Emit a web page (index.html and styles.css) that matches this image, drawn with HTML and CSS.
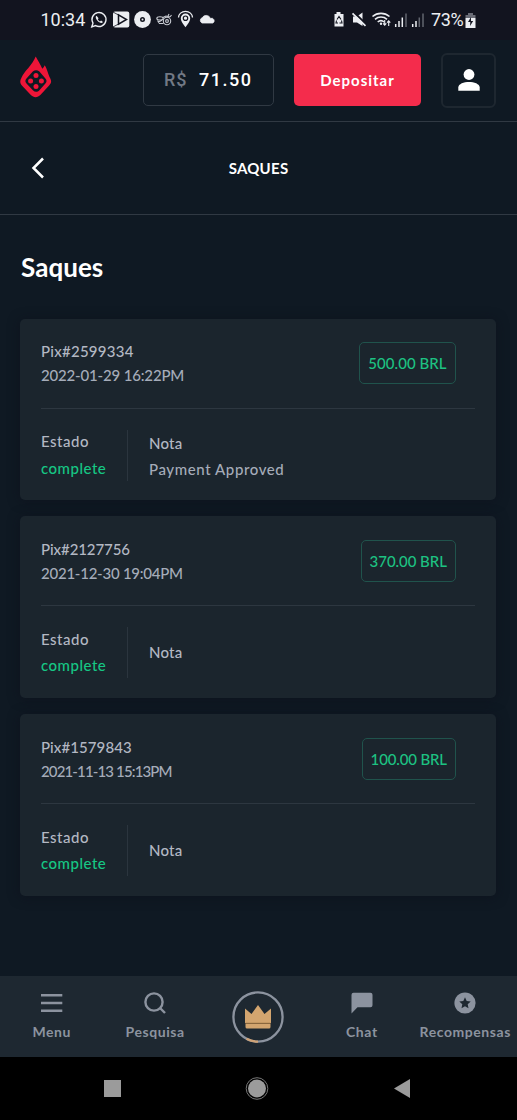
FILE: index.html
```html
<!DOCTYPE html>
<html lang="pt-BR">
<head>
<meta charset="utf-8">
<meta name="viewport" content="width=device-width, initial-scale=1">
<title>Saques</title>
<link rel="stylesheet" href="styles.css">
</head>
<body>
<div class="screen">
  <div class="status">
    <span class="clock">10:34</span>
    <svg class="status-left" width="126" height="20" viewBox="90 10 126 20" fill="none">
      <path d="M91.800 26.800l1.200-3.700a7 7 0 1 1 2.600 2.500z" stroke="#eceef2" stroke-width="1.400"/>
      <path d="M96.500 15.800c-1.400.8-.8 3 1 5s4.200 3.100 5.500 1.300l-1.900-1.500-1.200.9c-1-.5-1.700-1.300-2.100-2.300l.8-.9z" fill="#eceef2"/>
      <rect x="113" y="11.500" width="16.300" height="16" rx="2" fill="#eceef2"/>
      <path d="M118.500 14.800l8 4.700-8 4.700z" stroke="#12141f" stroke-width="1.500"/><path d="M113 12l5.500 3M113 27l5.500-3" stroke="#12141f" stroke-width=".8"/>
      <circle cx="142.500" cy="19.500" r="8.400" fill="#eceef2"/>
      <circle cx="142.500" cy="19.500" r="2.500" fill="#12141f"/><circle cx="142.500" cy="19.500" r="1" fill="#eceef2"/>
      <g stroke="#c9ccd3" stroke-width="1.100"><circle cx="167" cy="21" r="3.700"/><circle cx="167" cy="21" r="1.400"/><ellipse cx="160" cy="18.400" rx="3.200" ry="1.600"/><path d="M157.500 20.500l2 3h4M158 22.500l4-2.500M163 17.500l3-1.500 4 1M168 16l1-2M170 17l1.500-2"/></g>
      <path d="M178.500 17.500a7 6.200 0 0 1 14 0" stroke="#eceef2" stroke-width="1.300"/>
      <path d="M185.500 13.500a4.700 4.700 0 0 0-4.700 4.700c0 3.500 4.700 9 4.700 9s4.700-5.500 4.700-9a4.700 4.700 0 0 0-4.700-4.700z" fill="#eceef2"/><circle cx="185.500" cy="18.200" r="2.200" stroke="#12141f" stroke-width="1.200"/>
      <path d="M202 23a2.900 2.900 0 0 1 .2-5.300 4.600 4.600 0 0 1 8.300.8 2.500 2.500 0 0 1 2.200 4.500z" fill="#eceef2" stroke="#eceef2" stroke-width=".8"/>
    </svg>
    <svg class="status-right" width="96" height="20" viewBox="331 10 96 20" fill="none">
      <path d="M334.500 14h2v-2h4v2h3v12.500h-9z" fill="#eceef2"/>
      <path d="M337 19.500l2-3 2 3M336.500 20.500l-.5 2.500h2M341.500 20.500l.5 2.500h-2.500" stroke="#12141f" stroke-width="1.100"/>
      <path d="M353 16.500h4l5.500-4v13.500L357 22.500h-4z" fill="#eceef2"/>
      <path d="M353.500 12l13 12.500" stroke="#12141f" stroke-width="2"/><path d="M352.500 13.300l13 12.500" stroke="#eceef2" stroke-width="1.700"/>
      <path d="M372.500 16.500a13 13 0 0 1 17 0M375 19.300a9 9 0 0 1 12 0M377.700 22a5 5 0 0 1 6.500 0" stroke="#eceef2" stroke-width="1.600"/><circle cx="381" cy="23.800" r="1.200" fill="#eceef2"/>
      <path d="M384.700 20v5m-1.600-1.600l1.600 1.800 1.600-1.800M388.700 26v-5m-1.600 1.600l1.600-1.800 1.600 1.800" stroke="#eceef2" stroke-width="1.100"/>
      <g stroke-width="1.500"><path d="M395.700 27v-3M399 27v-6M402.300 27v-9.500" stroke="#eceef2"/><path d="M406 27V13.500" stroke="#62656f"/><path d="M412.700 27v-3M416 27v-6" stroke="#eceef2"/><path d="M419.300 27v-9.500M423 27V13.500" stroke="#62656f"/></g>
    </svg>
    <span class="percent">73%</span>
    <svg class="battery" width="11" height="15" viewBox="0 0 11 15"><path d="M3 0h5v2h2.500v3H.5V2H3z" fill="#696b75"/><path d="M.5 5h10v10H.5z" fill="#eceef2"/><path d="M6 4L3 9h2.300L5 13l3.200-5H6z" fill="#12141f"/></svg>
  </div>

  <header class="header">
    <svg class="logo" width="32" height="42" viewBox="0 0 32 42">
      <path d="M15.700.5C17.500 4 20.500 8.500 22.300 12.800c1-1 1.800-2 2.500-3.500 2.200 3.500 3 8 4.700 11.700 2.200 4 2.300 5.600-.6 8.700l-8.300 9.100c-3.200 3.300-6.800 3.300-10 0l-8.500-9.100c-2.500-3-2.300-4.700-.3-8.700C4 15.500 12.500 9 15.700.5z" fill="#ef1538"/>
      <path d="M12.800 15.600c2-1.900 4.500-1.900 6.600 0l6 6.900c1.500 1.700 1.500 3.300 0 5l-6 6.700c-2 2-4.500 2-6.500 0l-6.400-6.700c-1.500-1.700-1.500-3.300 0-5z" fill="#0f1923"/>
      <g fill="#ef1538"><circle cx="16" cy="19.500" r="2.500"/><circle cx="10.600" cy="25" r="2.500"/><circle cx="21.400" cy="25" r="2.500"/><circle cx="16" cy="30.500" r="2.500"/></g>
    </svg>
    <div class="balance"><span class="currency">R$</span><span class="amount">71.50</span></div>
    <button class="deposit"><span>Depositar</span></button>
    <button class="profile" aria-label="Perfil"><svg width="22" height="22" viewBox="0 0 22 22" fill="#fff"><circle cx="11" cy="5.500" r="5.400"/><path d="M.3 21.800v-3.300C.3 14.800 6 13 11 13s10.700 1.800 10.700 5.500v3.300z"/></svg></button>
  </header>

  <div class="titlebar">
    <svg class="back" width="14" height="22" viewBox="0 0 14 22"><path d="M12 1.500L2.500 11l9.500 9.500" fill="none" stroke="#fff" stroke-width="2.500"/></svg>
    <span class="bar-title">SAQUES</span>
  </div>

  <main class="content">
    <h1 class="heading">Saques</h1>
    <div class="cards">
      <article class="card">
        <div class="card-top">
          <div class="ident"><div class="pix">Pix#2599334</div><div class="date">2022-01-29 16:22PM</div></div>
          <div class="value value-500">500.00 BRL</div>
        </div>
        <div class="card-bottom">
          <div class="state"><div class="label">Estado</div><div class="complete">complete</div></div>
          <div class="note"><div class="nota">Nota</div><div class="approved">Payment Approved</div></div>
        </div>
      </article>
      <article class="card">
        <div class="card-top">
          <div class="ident"><div class="pix pix-2">Pix#2127756</div><div class="date date-2">2021-12-30 19:04PM</div></div>
          <div class="value value-370">370.00 BRL</div>
        </div>
        <div class="card-bottom">
          <div class="state"><div class="label">Estado</div><div class="complete">complete</div></div>
          <div class="note"><div class="nota">Nota</div></div>
        </div>
      </article>
      <article class="card">
        <div class="card-top">
          <div class="ident"><div class="pix pix-3">Pix#1579843</div><div class="date date-3">2021-11-13 15:13PM</div></div>
          <div class="value value-100">100.00 BRL</div>
        </div>
        <div class="card-bottom">
          <div class="state"><div class="label">Estado</div><div class="complete">complete</div></div>
          <div class="note"><div class="nota">Nota</div></div>
        </div>
      </article>
    </div>
  </main>

  <nav class="tabs">
    <div class="tab"><svg width="22" height="22" viewBox="0 0 22 22" stroke="#8c939f" stroke-width="2.400"><path d="M0 3.200h21.300M0 11h21.300M0 18.700h21.300"/></svg><span>Menu</span></div>
    <div class="tab"><svg width="22" height="22" viewBox="0 0 22 22" fill="none" stroke="#8c939f" stroke-width="2.400"><circle cx="10" cy="10" r="8.600"/><path d="M16 16l5 5"/></svg><span>Pesquisa</span></div>
    <div class="tab tab-crown"><svg width="52" height="52" viewBox="0 0 52 52" fill="none"><circle cx="26" cy="26" r="24.600" stroke="#8c939f" stroke-width="2.300"/><path d="M14.500 47.800a24.600 24.600 0 0 0 11.500 2.800" stroke="#cfa276" stroke-width="2.300"/><path d="M13 17.500l6.500 5.500L26 14l6.500 9 6.500-5.500V32H13z" fill="#d3a56f"/><path d="M13.500 32.500h25V36q0 1.500-1.500 1.500H15q-1.500 0-1.500-1.500z" fill="#d3a56f"/><path d="M13.500 32.300h25" stroke="#8f683a"/></svg></div>
    <div class="tab"><svg width="22" height="22" viewBox="0 0 22 22" fill="#8c939f"><path d="M2.500.7h17q2 0 2 2v10.600q0 2-2 2H6.500L.5 21.500V2.700q0-2 2-2z"/></svg><span>Chat</span></div>
    <div class="tab"><svg width="22" height="22" viewBox="0 0 22 22"><circle cx="11" cy="11" r="10.600" fill="#8c939f"/><path d="M11 5.200l1.700 3.700 4 .5-3 2.800.8 4-3.500-2-3.500 2 .8-4-3-2.800 4-.5z" fill="#1e2831"/></svg><span>Recompensas</span></div>
  </nav>

  <div class="system">
    <svg width="517" height="63" viewBox="0 1057 517 63"><path d="M104 1080h17v17h-17z" fill="#9b9b9b"/><circle cx="257" cy="1088.500" r="10.800" fill="none" stroke="#777" stroke-width="1"/><circle cx="257" cy="1088.500" r="9" fill="#9b9b9b"/><path d="M394 1088.500l16-9.500v19z" fill="#9b9b9b"/></svg>
  </div>
</div>
</body>
</html>
```
FILE: styles.css
```css
* { box-sizing: border-box; }
body { margin: 0; background: #0f1923; }
.screen { width: 517px; height: 1120px; display: flex; flex-direction: column; overflow: hidden; background: #0f1923; font-family: Lato, sans-serif; }
.screen svg { display: block; flex: none; }
.screen span, .screen .card div { white-space: nowrap; }

.status { height: 40px; flex: none; display: flex; align-items: center; background: #12141f; color: #eceef2; font: 18px/40px Roboto, sans-serif; padding-left: 40.500px; }
.clock { width: 49.500px; letter-spacing: 0; }
.status-right { margin-left: 115px; }
.percent { width: 38px; margin-left: 4px; letter-spacing: -.4px; }
.battery { margin-left: -4px; }

.header { height: 82px; flex: none; display: flex; align-items: center; padding: 0 21px 1px 20px; border-bottom: 1px solid #303943; }
.logo { margin-top: -7px; }
.balance { width: 131px; height: 52px; margin-left: 91px; display: flex; align-items: center; padding-left: 20px; border: 1px solid #303943; border-radius: 5px; font: 500 18px/50px Roboto, sans-serif; }
.currency { color: #727985; width: 35px; letter-spacing: .8px; }
.amount { color: #fff; letter-spacing: 1.500px; }
.deposit { width: 127px; height: 52px; margin-left: 20px; border: 0; border-radius: 5px; background: #f42c4c; color: #fff; font: 700 15px/52px Lato, sans-serif; letter-spacing: .98px; padding: 0; }
.profile { width: 55px; height: 55px; margin-left: 20px; padding: 0; border: 2px solid #1e2730; border-radius: 6px; background: transparent; display: flex; align-items: center; justify-content: center; }

.titlebar { height: 93px; flex: none; display: grid; grid-template-columns: 60px 1fr 60px; align-items: center; border-bottom: 1px solid #303943; }
.back { margin-left: 31px; }
.bar-title { text-align: center; color: #fff; font-size: 15px; font-weight: 700; letter-spacing: .25px; }

.content { flex: 1; padding: 0 21px 0 20px; }
.heading { margin: 0; padding: 35px 0 0 1px; height: 103.600px; color: #fff; font-size: 26px; line-height: 34px; font-weight: 700; letter-spacing: .05px; }
.cards { display: flex; flex-direction: column; gap: 16.200px; }
.card { height: 181.600px; padding: 20.400px 21px 0 21px; border-radius: 5px; background: #1b252d; box-shadow: 0 1px 12px rgba(12, 15, 26, .55); color: #b3b8c3; font-size: 15px; font-weight: 500; line-height: 24px; }
.card-top { height: 69.600px; display: flex; justify-content: space-between; align-items: flex-start; padding-right: 19px; border-bottom: 1px solid #2d3740; }
.pix { letter-spacing: .25px; }
.pix-2 { letter-spacing: -.08px; }
.pix-3 { letter-spacing: .08px; }
.date { letter-spacing: -.17px; color: #a5acb9; }
.date-2 { letter-spacing: -.24px; }
.date-3 { letter-spacing: -.86px; }
.value { height: 42px; margin-top: 3px; display: flex; align-items: center; justify-content: center; border: 1px solid #20534c; border-radius: 5px; color: #1dc282; }
.value-500 { width: 97px; letter-spacing: .05px; }
.value-370 { width: 95.500px; letter-spacing: -.05px; }
.value-100 { width: 94.500px; letter-spacing: -.15px; }
.card-bottom { display: flex; align-items: stretch; padding-top: 21px; }
.state { width: 87px; height: 51px; padding: 0 20px 1px 0; border-right: 1px solid #2b353e; line-height: 26.300px; display: flex; flex-direction: column; justify-content: center; }
.label { letter-spacing: .5px; }
.complete { color: #16c784; letter-spacing: .5px; }
.note { padding: 0 0 1px 21px; display: flex; flex-direction: column; justify-content: center; line-height: 26.300px; }
.nota { letter-spacing: .2px; }
.approved { color: #a5acb9; letter-spacing: .6px; }

.tabs { height: 81px; flex: none; display: grid; grid-template-columns: repeat(5, 103.400px); background: #1e2831; color: #8c939f; font-size: 14px; font-weight: 700; }
.tab { display: flex; flex-direction: column; align-items: center; padding-top: 16px; line-height: 20px; }
.tab span { margin-top: 8px; letter-spacing: .57px; }
.tab-crown { padding-top: 15px; }
.system { height: 63px; flex: none; background: #000; }
```
